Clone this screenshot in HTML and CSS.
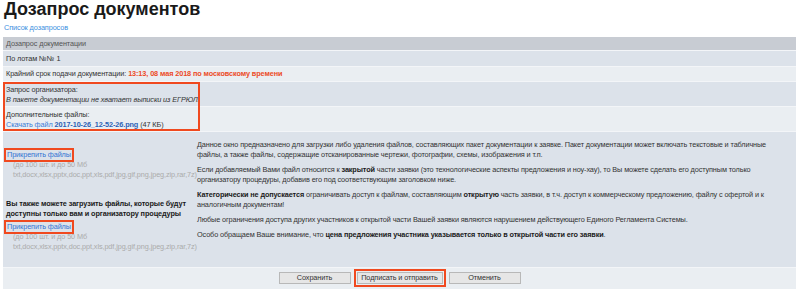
FILE: index.html
```html
<html>
<head>
    <meta http-equiv="Content-Type" content="text/html; charset=UTF-8" />
    <title>Дозапрос документов</title>
    <link rel="stylesheet" href="styles.css">
</head>
<body>

<h1 class="title">Дозапрос документов</h1>
<a class="back" href="#">Список дозапросов</a>

<div class="panel">
    <div class="row head">Дозапрос документации</div>
    <div class="row dark">По лотам №№ 1</div>
    <div class="row light">Крайний срок подачи документации: <b class="deadline">13:13, 08 мая 2018 по московскому времени</b></div>

    <div class="request">
        <div class="row dark tall">
            <div>Запрос организатора:</div>
            <div class="quote">В пакете документации не хватает выписки из ЕГРЮЛ.</div>
        </div>
        <div class="row light tall">
            <div>Дополнительные файлы:</div>
            <div><a class="file" href="#">Скачать файл <b>2017-10-26_12-52-26.png</b></a> (47 КБ)</div>
        </div>
        <span class="hl"></span>
    </div>

    <div class="row dark upload">
        <div class="attach">
            <a class="attach-link" href="#">Прикрепить файлы</a>
            <div class="hint">(до 100 шт. и до 50 Мб</div>
            <div class="hint">txt,docx,xlsx,pptx,doc,ppt,xls,pdf,jpg,gif,png,jpeg,zip,rar,7z)</div>

            <div class="private">Вы также можете загрузить файлы, которые будут доступны только вам и организатору процедуры</div>

            <a class="attach-link" href="#">Прикрепить файлы</a>
            <div class="hint">(до 100 шт. и до 50 Мб</div>
            <div class="hint">txt,docx,xlsx,pptx,doc,ppt,xls,pdf,jpg,gif,png,jpeg,zip,rar,7z)</div>
        </div>

        <div class="notes">
            <p>Данное окно предназначено для загрузки либо удаления файлов, составляющих пакет документации к заявке. Пакет документации может включать текстовые и табличные файлы, а также файлы, содержащие отсканированные чертежи, фотографии, схемы, изображения и т.п.</p>
            <p>Если добавляемый Вами файл относится к <b>закрытой</b> части заявки (это технологические аспекты предложения и ноу-хау), то Вы можете сделать его доступным только организатору процедуры, добавив его под соответствующим заголовком ниже.</p>
            <p><b>Категорически не допускается</b> ограничивать доступ к файлам, составляющим <b>открытую</b> часть заявки, в т.ч. доступ к коммерческому предложению, файлу с офертой и к аналогичным документам!</p>
            <p>Любые ограничения доступа других участников к открытой части Вашей заявки являются нарушением действующего Единого Регламента Системы.</p>
            <p>Особо обращаем Ваше внимание, что <b>цена предложения участника указывается только в открытой части его заявки</b>.</p>
        </div>
    </div>

    <div class="row light actions">
        <button class="btn">Сохранить</button>
        <button class="btn btn-wide marked">Подписать и отправить</button>
        <button class="btn">Отменить</button>
    </div>
</div>

</body>
</html>
```

FILE: styles.css
```css
        html {
            width: 100%;
            height: 100%;
            overflow: hidden;
        }

        body {
            margin: 0;
            padding: 0 4px 0 3px;
            font-family: "Liberation Sans", Arial, sans-serif;
            font-size: 7.3px;
            letter-spacing: -0.1px;
            color: #333;
            background: #fff;
        }

        .title {
            margin: 0;
            padding: 0 1px;
            font-size: 18px;
            line-height: 19px;
            letter-spacing: 0;
            color: #1a1a1a;
        }

        .back {
            display: block;
            margin-top: 4px;
            padding: 0 1px;
            line-height: 10px;
            color: #3c8fe0;
            text-decoration: none;
        }

        .panel {
            margin-top: 4px;
            display: flex;
            flex-direction: column;
            gap: 1px;
            background: #f3f5f8;
        }

        .row {
            padding: 0 3px;
        }

        .head {
            height: 13px;
            line-height: 13px;
            background: #c8ccd3;
            color: #555;
        }

        .dark {
            background: #dce2ea;
            height: 15px;
            line-height: 15px;
        }

        .light {
            background: #eaeef2;
            height: 14px;
            line-height: 14px;
        }

        .deadline {
            color: #ec4a26;
        }

        /* highlighted organiser request */
        .request {
            position: relative;
            display: flex;
            flex-direction: column;
            gap: 1px;
        }

        .row.tall {
            height: auto;
            line-height: 10px;
            padding-top: 3px;
            padding-bottom: 1px;
        }

        .quote {
            font-style: italic;
        }

        .file {
            color: #3a7cd6;
            text-decoration: none;
        }

        .file b {
            color: #2d62b5;
        }

        .hl {
            position: absolute;
            left: 0;
            top: 0;
            bottom: 0;
            width: 197px;
            border: 2px solid #f0491f;
            box-sizing: border-box;
        }

        /* files + notes */
        .upload {
            height: 135px;
            line-height: 10px;
            display: grid;
            grid-template-columns: 191px 1fr;
        }

        .attach {
            padding-top: 18px;
        }

        .attach-link {
            display: inline-block;
            color: #3575d3;
            text-decoration: none;
            outline: 2px solid #f0491f;
            outline-offset: 0px;
            padding: 0 1px;
            margin-left: 0;
        }

        .hint {
            padding-left: 7px;
            color: #ababab;
            white-space: nowrap;
        }

        .private {
            margin: 19px 0 3px;
            font-weight: bold;
            color: #1a1a1a;
        }

        .notes {
            padding: 8px 2px 0 0;
            letter-spacing: -0.12px;
        }

        .notes p {
            margin: 0 0 5px;
        }

        .notes b {
            color: #1a1a1a;
        }

        /* buttons */
        .actions {
            height: 20px;
            display: flex;
            justify-content: center;
            align-items: flex-start;
            gap: 6px;
            padding-top: 4px;
        }

        .btn {
            width: 72px;
            height: 12px;
            padding: 0;
            font-family: "Liberation Sans", Arial, sans-serif;
            font-size: 7.3px;
            letter-spacing: -0.1px;
            line-height: 10px;
            white-space: nowrap;
            color: #333;
            background: #e6e6e6;
            border: 1px solid #b8b8b8;
            border-radius: 0;
        }

        .btn-wide {
            width: 86px;
        }

        .marked {
            outline: 2px solid #f0491f;
            outline-offset: 1px;
        }
```
